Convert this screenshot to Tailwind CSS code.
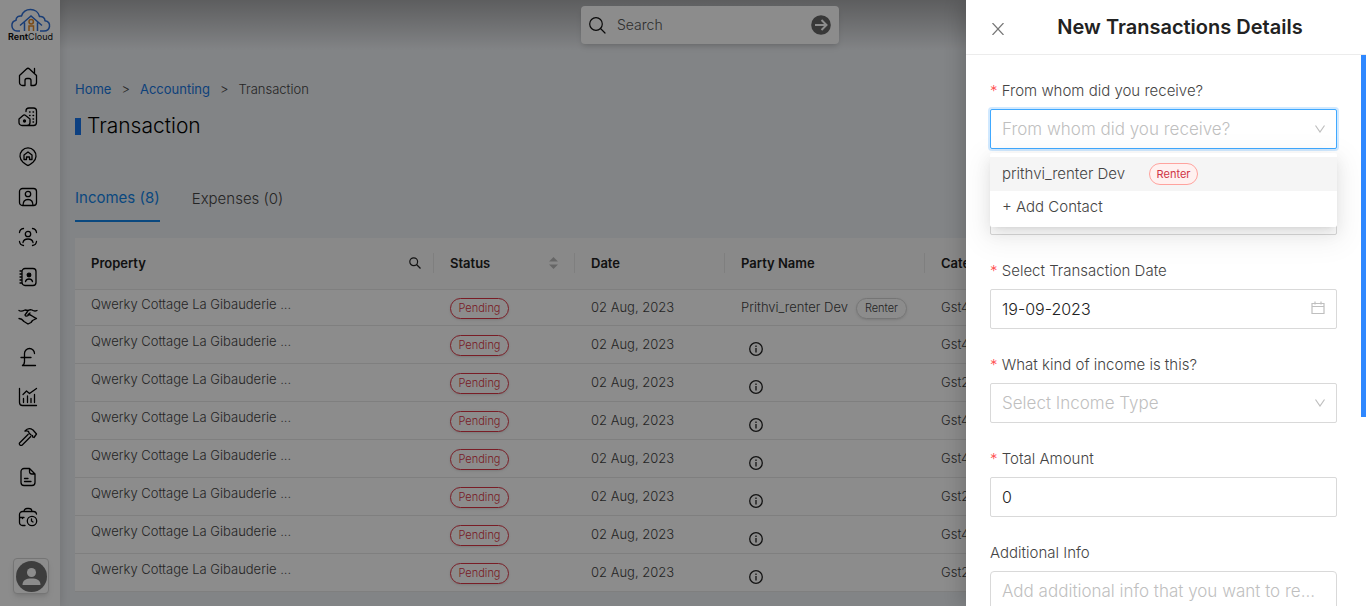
<!DOCTYPE html>
<html lang="en">
<head>
<meta charset="utf-8">
<meta name="viewport" content="width=device-width, initial-scale=1">
<title>RentCloud - Transaction</title>
<script src="https://cdn.jsdelivr.net/npm/@tailwindcss/browser@4"></script>
</head>
<body class="relative h-screen overflow-hidden bg-[#edf0f4] font-['Inter','Liberation_Sans',sans-serif] text-[13px] font-light text-[#444]">
<div class="flex h-full">

  <!-- Sidebar -->
  <aside class="relative flex w-15 shrink-0 flex-col bg-white shadow-[0_0_10px_rgba(0,0,0,0.15)]">
    <a href="#" aria-label="RentCloud" class="flex h-[57px] flex-col items-center pt-2 pl-px">
      <svg class="h-[34px] w-[46px]" viewBox="0 0 46 34" fill="none">
        <path d="M12 23H9a5.500 5.500 0 0 1-1-10.800C8 9 11 7.500 13.500 8 15 3.500 18.500 1.500 22.500 1.500S30.500 4 31.500 8.500c3-.5 5.500 1.500 5.500 4.200 3.500.5 5 3 4.500 5.800-.5 3-2.500 4.500-5.500 4.500h-4" stroke="#2f6fd6" stroke-width="1.500"/>
        <path d="M12 17.500 23 8l11 9.500M16.500 14.500V23M29.500 14.500V23" stroke="#2f6fd6" stroke-width="1.500"/>
        <path d="M21 23V18h4.500v5" stroke="#e08a2c" stroke-width="1.500"/><circle cx="23.200" cy="13.800" r="2.200" stroke="#e08a2c" stroke-width="1.500"/>
        <text x="0" y="31.500" font-size="9" font-weight="700" fill="#111">Rent<tspan font-weight="400">Cloud</tspan></text>
      </svg>
    </a>
    <nav class="flex flex-1 flex-col items-start pl-[18px]" aria-label="Main">
      <a href="#" aria-label="Home" class="flex h-10 items-center"><svg class="size-5" viewBox="0 0 20 20" fill="none" stroke="#000" stroke-width="1.300" stroke-linecap="round" stroke-linejoin="round"><path d="M7 18.500H4.500A3 3 0 0 1 1.500 15.500V8.500L8.500 2a2.200 2.200 0 0 1 3 0l7 6.500v7a3 3 0 0 1-3 3H13v-5a2 2 0 0 0-2-2H9a2 2 0 0 0-2 2zM16.500 6V1.500"/></svg></a>
      <a href="#" aria-label="Properties" class="flex h-10 items-center"><svg class="size-5" viewBox="0 0 20 20" fill="none" stroke="#000" stroke-width="1.300" stroke-linecap="round" stroke-linejoin="round"><path d="M8 4.500V4a3 3 0 0 1 3-3h4.500a3 3 0 0 1 3 3v11.500a3 3 0 0 1-3 3H4a3 3 0 0 1-3-3V12l4-3.500a2 2 0 0 1 2.600 0L12 12v3.500a3 3 0 0 1-3 3"/><path d="M11.500 5h.6M15 5h.6M11.500 8.500h.6M15 8.500h.6M15 12h.6M15 15h.6"/><circle cx="6.500" cy="14" r="1" fill="#000"/></svg></a>
      <a href="#" aria-label="Locations" class="flex h-10 items-center"><svg class="size-5" viewBox="0 0 20 20" fill="none" stroke="#000" stroke-width="1.300" stroke-linejoin="round"><path d="M10 18.500c-1.500 0-3-1.800-5-3.300A8 8 0 1 1 15 15.200c-2 1.500-3.500 3.300-5 3.300z"/><path d="M6 12.500V8l4-3 4 3v4.500h-2.500V10h-3v2.500z"/></svg></a>
      <a href="#" aria-label="Profile" class="flex h-10 items-center"><svg class="size-5" viewBox="0 0 20 20" fill="none" stroke="#000" stroke-width="1.300"><rect x="1.500" y="1.500" width="17" height="17" rx="3"/><circle cx="10" cy="7" r="2.700"/><path d="M5 18.500c0-4 1.500-6 5-6s5 2 5 6"/></svg></a>
      <a href="#" aria-label="Tenants" class="flex h-10 items-center"><svg class="size-5" viewBox="0 0 20 20" fill="none" stroke="#000" stroke-width="1.300" stroke-linecap="round"><circle cx="10" cy="7" r="2.700"/><path d="M5 15.500c.5-3 2.500-3.500 5-3.500s4.500.5 5 3.500M1.500 5.500c.3-2.500 1.500-3.700 4-4M14.500 1.500c2.500.3 3.700 1.500 4 4M1.500 14.500c.3 2.500 1.500 3.700 4 4M14.500 18.500c2.500-.3 3.700-1.500 4-4"/></svg></a>
      <a href="#" aria-label="Contacts" class="flex h-10 items-center"><svg class="size-5" viewBox="0 0 20 20" fill="none" stroke="#000" stroke-width="1.300" stroke-linecap="round"><rect x="4" y="1.500" width="14" height="17" rx="3"/><circle cx="11" cy="8" r="1.800" fill="#000"/><path d="M7.500 14.500c.5-2 2-2.500 3.500-2.500s3 .5 3.500 2.500M2 4h1.500M2 7h1.500M2 10h1.500M2 13h1.500M2 16h1.500"/></svg></a>
      <a href="#" aria-label="Deals" class="flex h-10 items-center"><svg class="size-5" viewBox="0 0 20 20" fill="none" stroke="#000" stroke-width="1.300" stroke-linecap="round" stroke-linejoin="round"><path d="M1 3.500c2 1.500 4 .5 6-.5l3 .5M19 3.500c-2 1-3.500.5-5-.5-2-.7-3.500 0-4.500 1.500L7 8c.5 1.500 2.500 1.500 4-.5 2 0 4 2.500 7.500 4M1 11.500c2.500 0 3.500 1 5 3l4 2.500 3-1.500 1.500-2 4-2M10 7.500 12 6"/></svg></a>
      <a href="#" aria-label="Accounting" class="flex h-10 items-center"><svg class="size-5" viewBox="0 0 20 20" fill="none" stroke="#000" stroke-width="1.300" stroke-linecap="round"><path d="M16.500 6.500a5 5 0 0 0-10 0v8c0 2-1 3.500-2.500 4h13.500M3 10.500h10"/></svg></a>
      <a href="#" aria-label="Reports" class="flex h-10 items-center"><svg class="size-5" viewBox="0 0 20 20" fill="none" stroke="#000" stroke-width="1.300" stroke-linecap="round" stroke-linejoin="round"><path d="M1.500 1.500v14a3 3 0 0 0 3 3h14M5.500 15.500v-4M9.500 15.500V9M13 15.500v-4M16.500 15.500V7.500M5 7.500l3.500-3.500 3 2.500L18.500 1.500"/></svg></a>
      <a href="#" aria-label="Maintenance" class="flex h-10 items-center"><svg class="size-5" viewBox="0 0 20 20" fill="none" stroke="#000" stroke-width="1.300" stroke-linejoin="round"><path d="m10.500 7-9 9c-.7 1.500 1 3 2.500 2.200l9-9M7 4c2.500-3 5-3 8-1l3.500 4-2.500 3.500-1.500-.5v-1.500l-1.500-.5-2-2c0-2-1.500-2.500-4-2z"/></svg></a>
      <a href="#" aria-label="Documents" class="flex h-10 items-center"><svg class="size-5" viewBox="0 0 20 20" fill="none" stroke="#000" stroke-width="1.300" stroke-linecap="round" stroke-linejoin="round"><path d="M11.500 1.500H6a3 3 0 0 0-3 3v11a3 3 0 0 0 3 3h8a3 3 0 0 0 3-3V7zV4.500A2.500 2.500 0 0 0 14 7h3M6.500 11.500H10M6.500 14.500H13"/></svg></a>
      <a href="#" aria-label="History" class="flex h-10 items-center"><svg class="size-5" viewBox="0 0 20 20" fill="none" stroke="#000" stroke-width="1.300" stroke-linecap="round"><path d="M7 18.500H4.500a3 3 0 0 1-3-3v-8a3 3 0 0 1 3-3h11a3 3 0 0 1 3 2.500M6 4.500c0-2 1.500-3 3-3h2c1.500 0 3 1 3 3M1.500 10.500H6M4.500 10.500v1"/><circle cx="14" cy="14" r="4.700"/><path d="M13.500 12v2l1.500 1"/></svg></a>
    </nav>
    <button aria-label="Account" class="mb-3 ml-[13px] flex size-9 items-center justify-center rounded border border-[#d5d5d5] bg-white shadow-md"><svg class="size-8 shrink-0" viewBox="0 0 32 32"><circle cx="16.500" cy="16.500" r="15.500" fill="#707070"/><circle cx="16.500" cy="12.500" r="4.500" fill="#fff"/><path d="M7.500 25c0-5 3.500-6.500 9-6.500s9 1.500 9 6.500z" fill="#fff"/></svg></button>
  </aside>

  <!-- Page -->
  <main class="min-w-0 flex-1 overflow-hidden">
    <header class="flex h-[50px] justify-center bg-linear-to-b from-[#aaabad] to-[#edf0f4] pr-1.5 pt-1.5">
      <div class="flex h-[38px] w-[258px] items-center rounded bg-white px-2 shadow-md">
        <svg class="size-[17px] shrink-0" viewBox="0 0 17 17" fill="none" stroke="#111" stroke-width="1.200" stroke-linecap="round"><circle cx="7" cy="7" r="6.300"/><path d="m11.500 11.500 4.500 4.500"/></svg>
        <input type="search" aria-label="Search" placeholder="Search" class="ml-[11px] min-w-0 flex-1 text-sm outline-none placeholder:text-[#555]">
        <button aria-label="Go"><svg class="size-5" viewBox="0 0 20 20"><circle cx="10" cy="10" r="9.800" fill="#666"/><path d="M4 10h11M10.500 5l5 5-5 5" fill="none" stroke="#fff" stroke-width="2"/></svg></button>
      </div>
    </header>
    <div class="pl-[15px] pt-[29px]">
      <nav class="flex gap-2.5 leading-5" aria-label="Breadcrumb">
        <a href="#" class="font-normal text-[#1877e0]">Home</a><span>&gt;</span><a href="#" class="font-normal text-[#1877e0]">Accounting</a><span>&gt;</span><span>Transaction</span>
      </nav>
      <div class="mt-3 flex h-[30px] items-center gap-1.5"><span class="h-[17px] w-1.5 bg-[#1876ec]"></span><h1 class="text-[21px] font-light text-black">Transaction</h1></div>
      <div class="mt-[46px] flex gap-8 text-[15px]" role="tablist">
        <button role="tab" aria-selected="true" class="h-[35px] border-b-2 border-[#1284e8] pb-2.5 font-normal text-[#1284e8]">Incomes (8)</button>
        <button role="tab" aria-selected="false" class="h-[35px] pb-2.5">Expenses (0)</button>
      </div>
      <table class="mt-4 w-full table-fixed border-collapse bg-white text-left">
        <colgroup><col class="w-[359px]"><col class="w-[141px]"><col class="w-[150px]"><col class="w-[200px]"><col></colgroup>
        <thead>
          <tr class="h-[51px] border-b border-[#e8e8e8] bg-[#fafafa] text-[#222]">
            <th class="p-0 font-semibold"><div class="flex h-5 items-center justify-between border-r border-[#e8e8e8] pl-4 pr-3">Property<button aria-label="Filter property"><svg class="size-3" viewBox="0 0 12 12" fill="none" stroke="#222" stroke-width="1.200"><circle cx="4.700" cy="4.700" r="3.900"/><path d="m7.500 7.500 4 4"/></svg></button></div></th>
            <th class="p-0 font-semibold"><div class="flex h-5 items-center justify-between border-r border-[#e8e8e8] px-4">Status<button aria-label="Sort by status"><svg class="h-3 w-[9px]" viewBox="0 0 9 12" fill="#bbb"><path d="M4.500 0 9 4.500H0zM0 7.500h9L4.500 12z"/></svg></button></div></th>
            <th class="p-0 font-semibold"><div class="flex h-5 items-center border-r border-[#e8e8e8] px-4">Date</div></th>
            <th class="p-0 font-semibold"><div class="flex h-5 items-center border-r border-[#e8e8e8] px-4">Party Name</div></th>
            <th class="px-4 py-0 font-semibold">Category</th>
          </tr>
        </thead>
        <tbody id="rows"></tbody>
      </table>
    </div>
  </main>
</div>

<template id="row">
  <tr class="h-[38px] border-b border-[#e8e8e8] first:h-9">
    <td class="px-4 pt-0 pb-1">Qwerky Cottage La Gibauderie ...</td>
    <td class="px-4 pt-0.5 pb-0"><span class="flex h-[21px] w-[59px] items-center justify-center rounded-full border border-[#dc3545] text-[11px] text-[#dc3545] shadow-sm">Pending</span></td>
    <td class="px-4 pt-0.5 pb-0">02 Aug, 2023</td>
    <td class="px-4 pt-0.5 pb-0"><svg class="ml-2 mt-2 size-3.5" viewBox="0 0 14 14" fill="none" stroke="#222" stroke-width="1.300"><circle cx="7" cy="7" r="6.300"/><path d="M7 6v4.500M7 3.500V5"/></svg></td>
    <td class="px-4 pt-0.5 pb-0"></td>
  </tr>
</template>
<template id="party"><span class="flex items-center gap-2 whitespace-nowrap">Prithvi_renter Dev<span class="flex h-[21px] w-[51px] shrink-0 items-center justify-center rounded-full border border-[#d5d5d5] text-[11px] shadow-sm">Renter</span></span></template>
<script>
['Gst4', 'Gst4', 'Gst2', 'Gst4', 'Gst4', 'Gst2', 'Gst4', 'Gst2'].forEach((category, i) => {
  const row = document.getElementById('row').content.cloneNode(true);
  const cells = row.querySelectorAll('td');
  cells[4].textContent = category;
  if (i === 0) cells[3].replaceChildren(document.getElementById('party').content.cloneNode(true));
  document.getElementById('rows').append(row);
});
</script>

<div class="absolute inset-0 bg-black/45"></div>

<!-- Drawer -->
<section role="dialog" aria-labelledby="drawer-title" class="absolute inset-y-0 right-0 flex w-[400px] flex-col overflow-hidden bg-white shadow-[-6px_0_16px_rgba(0,0,0,0.15)]">
  <header class="flex h-[55px] shrink-0 items-center border-b border-[#ececec] pl-[26px]">
    <button aria-label="Close" class="mt-1"><svg class="size-3" viewBox="0 0 12 12" fill="none" stroke="#777" stroke-width="1.200"><path d="m.5 0 11 12M11.500 0l-11 12"/></svg></button>
    <h2 id="drawer-title" class="flex-1 pl-1 pr-3.5 text-center text-xl font-semibold text-[#222]">New Transactions Details</h2>
  </header>
  <form class="flex flex-1 flex-col pl-6 pr-[29px] pt-6">
    <label for="from" class="h-[30px] text-[15px] leading-6"><span class="text-[#ff4d4f]">*</span> From whom did you receive?</label>
    <div class="relative">
      <select id="from" class="h-10 w-full appearance-none rounded-xs border border-[#40a9ff] bg-white px-[11px] pt-0.5 text-[17px] text-[#bfbfbf] shadow-[0_0_0_2px_rgba(24,144,255,0.2)] outline-none"><option>From whom did you receive?</option></select>
      <svg class="pointer-events-none absolute right-3 top-4 h-2 w-2.5" viewBox="0 0 10 8" fill="none" stroke="#bfbfbf" stroke-width="1.200"><path d="m.5.5 4.500 6.500L9.500.5"/></svg>
      <ul role="listbox" aria-label="Contacts" class="absolute inset-x-0 top-11 z-10 rounded-xs bg-white pb-1 pt-1 text-[15px] shadow-[0_3px_6px_-4px_rgba(0,0,0,0.12),0_6px_16px_0_rgba(0,0,0,0.08),0_9px_28px_8px_rgba(0,0,0,0.05)]">
        <li role="option" aria-selected="true" class="flex h-[34px] items-center gap-6 bg-[#f5f5f5] px-3">prithvi_renter Dev <span class="flex h-[22px] w-[49px] items-center justify-center rounded-full border border-[#ffa39e] bg-[#fff1f0] text-[11px] font-normal text-[#cf3545]">Renter</span></li>
        <li role="option" aria-selected="false" class="flex h-8 items-center px-3">+ Add Contact</li>
      </ul>
    </div>
    <select aria-label="Property" class="mt-[46px] h-10 w-full shrink-0 appearance-none rounded-xs border border-[#d9d9d9] bg-white"></select>
    <label for="date" class="mt-6 h-[30px] shrink-0 text-[15px] leading-6"><span class="text-[#ff4d4f]">*</span> Select Transaction Date</label>
    <div class="relative">
      <input id="date" type="text" value="19-09-2023" class="h-10 w-full rounded-xs border border-[#d9d9d9] px-[11px] text-base text-[#222]">
      <svg class="pointer-events-none absolute right-3 top-3 size-[14px]" viewBox="0 0 14 14" fill="none" stroke="#bfbfbf" stroke-width="1.200"><path d="M1 2.500h12v10H1zM1 5.500h12M4 .5v3M10 .5v3"/></svg>
    </div>
    <label for="kind" class="mt-6 h-[30px] shrink-0 text-[15px] leading-6"><span class="text-[#ff4d4f]">*</span> What kind of income is this?</label>
    <div class="relative">
      <select id="kind" class="h-10 w-full appearance-none rounded-xs border border-[#d9d9d9] bg-white px-[11px] pt-0.5 text-[17px] text-[#bfbfbf]"><option>Select Income Type</option></select>
      <svg class="pointer-events-none absolute right-3 top-4 h-2 w-2.5" viewBox="0 0 10 8" fill="none" stroke="#bfbfbf" stroke-width="1.200"><path d="m.5.5 4.500 6.500L9.500.5"/></svg>
    </div>
    <label for="amount" class="mt-6 h-[30px] shrink-0 text-[15px] leading-6"><span class="text-[#ff4d4f]">*</span> Total Amount</label>
    <input id="amount" type="text" value="0" class="h-10 w-full shrink-0 rounded-xs border border-[#d9d9d9] px-[11px] text-base text-[#222]">
    <label for="info" class="mt-6 h-[30px] shrink-0 text-[15px] leading-6">Additional Info</label>
    <input id="info" type="text" placeholder="Add additional info that you want to re..." class="h-10 w-full shrink-0 rounded border border-[#d9d9d9] px-[11px] text-[17px] placeholder:text-[#bfbfbf]">
  </form>
  <div class="absolute right-0 top-[55px] h-[362px] w-[5px] bg-[#2f88ff]"></div>
</section>
</body>
</html>
